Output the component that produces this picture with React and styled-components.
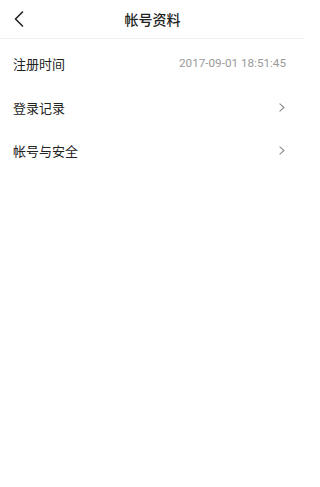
import React from 'react';
import styled, { createGlobalStyle } from 'styled-components';

const GlobalStyle = createGlobalStyle`
  html, body {
    margin: 0;
    padding: 0;
    background: #fff;
  }
  body {
    font-family: "Noto Sans CJK SC", "Noto Sans", Roboto, sans-serif;
  }
`;

const Page = styled.div`
  width: 305px;
  min-height: 487px;
  background: #fff;
`;

const Header = styled.header`
  position: relative;
  height: 38px;
  display: flex;
  align-items: center;
  justify-content: center;
  border-bottom: 1px solid #f2f2f2;
`;

const BackButton = styled.button`
  position: absolute;
  left: 10px;
  top: 9px;
  width: 18px;
  height: 20px;
  padding: 0;
  border: none;
  background: none;
  display: flex;
  align-items: center;
  justify-content: center;
`;

const Title = styled.h1`
  margin: 0;
  font-size: 14px;
  font-weight: 500;
  color: #222;
  line-height: 1;
`;

const List = styled.ul`
  list-style: none;
  margin: 0;
  padding: 3px 0 0;
`;

const Row = styled.li`
  height: 43.5px;
  padding: 0 20px 0 13px;
  display: flex;
  align-items: center;
  justify-content: space-between;
`;

const Label = styled.span`
  font-size: 13px;
  line-height: 1;
  color: #222;
`;

const Value = styled.span`
  font-family: Roboto, "Noto Sans", sans-serif;
  font-size: 11.7px;
  line-height: 1;
  color: #9a9a9a;
  margin-right: -1px;
`;

const Chevron = ({ size = 9, color = '#8c8c8c', width = 1.2 }) => (
  <svg width={size * 0.65} height={size} viewBox="0 0 6.5 10" fill="none">
    <path d="M1 1 L5.5 5 L1 9" stroke={color} strokeWidth={width} strokeLinecap="round" strokeLinejoin="round" />
  </svg>
);

const rows = [
  { label: '注册时间', value: '2017-09-01 18:51:45' },
  { label: '登录记录', arrow: true },
  { label: '帐号与安全', arrow: true },
];

export default function App() {
  return (
    <Page>
      <GlobalStyle />
      <Header>
        <BackButton aria-label="返回">
          <svg width="10" height="16" viewBox="0 0 10 16" fill="none">
            <path d="M8.5 1 L1.5 8 L8.5 15" stroke="#222" strokeWidth="1.6" strokeLinecap="round" strokeLinejoin="round" />
          </svg>
        </BackButton>
        <Title>帐号资料</Title>
      </Header>
      <List>
        {rows.map((r) => (
          <Row key={r.label}>
            <Label>{r.label}</Label>
            {r.value && <Value>{r.value}</Value>}
            {r.arrow && <Chevron />}
          </Row>
        ))}
      </List>
    </Page>
  );
}
